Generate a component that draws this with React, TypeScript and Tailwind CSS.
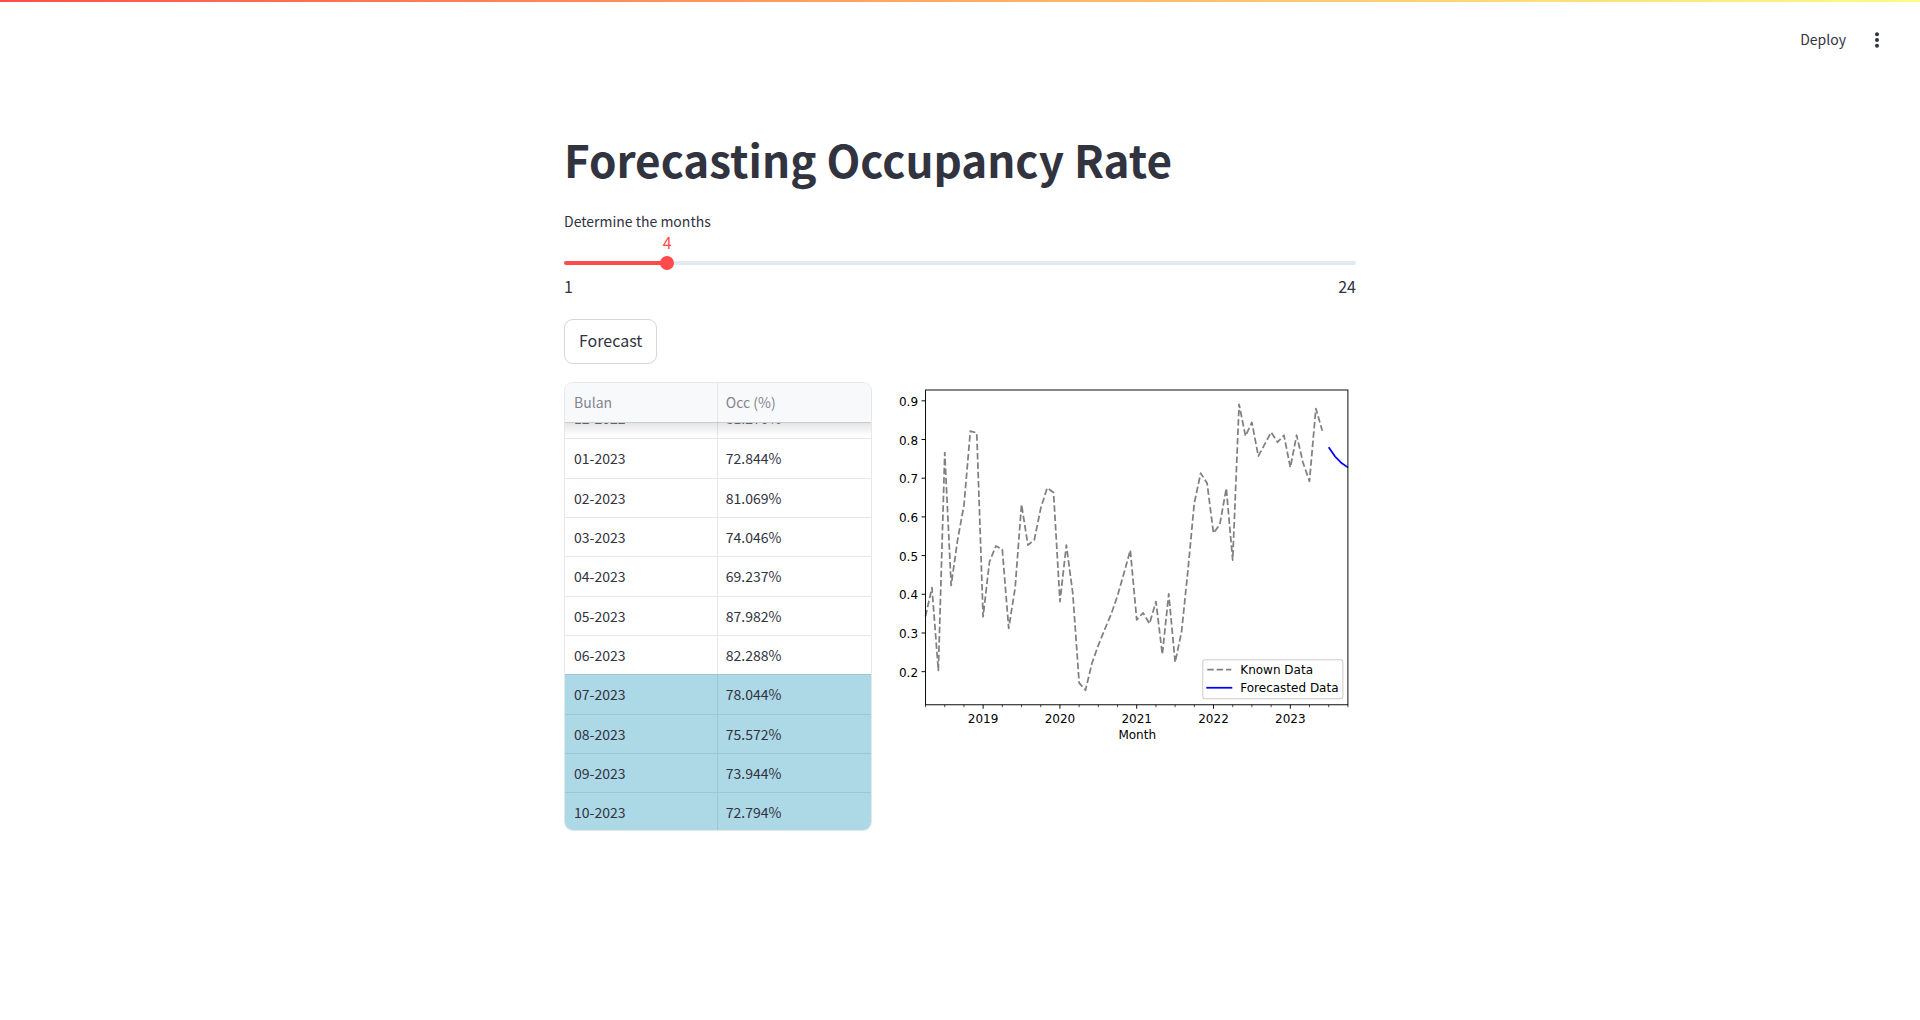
import { useState } from "react";

type Row = { month: string; occ: string; forecast?: boolean };

const rows: Row[] = [
  { month: "01-2023", occ: "72.844%" },
  { month: "02-2023", occ: "81.069%" },
  { month: "03-2023", occ: "74.046%" },
  { month: "04-2023", occ: "69.237%" },
  { month: "05-2023", occ: "87.982%" },
  { month: "06-2023", occ: "82.288%" },
  { month: "07-2023", occ: "78.044%", forecast: true },
  { month: "08-2023", occ: "75.572%", forecast: true },
  { month: "09-2023", occ: "73.944%", forecast: true },
  { month: "10-2023", occ: "72.794%", forecast: true },
];

// Monthly occupancy from April 2018 on.
const known = [
  0.343, 0.417, 0.203, 0.766, 0.423, 0.54, 0.63, 0.822, 0.817, 0.342, 0.484,
  0.525, 0.516, 0.312, 0.416, 0.632, 0.527, 0.541, 0.622, 0.675, 0.663, 0.381,
  0.527, 0.403, 0.171, 0.152, 0.221, 0.268, 0.309, 0.348, 0.396, 0.454, 0.514,
  0.334, 0.352, 0.324, 0.381, 0.245, 0.401, 0.224, 0.303, 0.462, 0.635, 0.713,
  0.687, 0.558, 0.581, 0.674, 0.488, 0.891, 0.809, 0.844, 0.757, 0.788, 0.819,
  0.793, 0.811, 0.728, 0.811, 0.74, 0.692, 0.88, 0.823,
];
const forecast = [0.78, 0.756, 0.739, 0.728];

const plot = { left: 33.5, right: 455.5, top: 8, bottom: 322.5 };
const xAt = (i: number) => plot.left + (i * (plot.right - plot.left)) / 66;
const yAt = (v: number) => 18.8 + (0.9 - v) * 386.6;
const points = (values: number[], start: number) =>
  values.map((v, i) => `${xAt(start + i).toFixed(1)},${yAt(v).toFixed(1)}`).join(" ");

const yTicks = [0.9, 0.8, 0.7, 0.6, 0.5, 0.4, 0.3, 0.2];
const quarters = Array.from({ length: 23 }, (_, i) => i * 3);
const years = [2019, 2020, 2021, 2022, 2023];

function Chart() {
  return (
    <svg
      viewBox="0 0 464 372"
      role="img"
      aria-label="Known and forecasted occupancy by month"
      className="block w-full font-['DejaVu_Sans',sans-serif] text-[12px]"
    >
      <polyline
        points={points(known, 0)}
        fill="none"
        stroke="#808080"
        strokeWidth="1.75"
        strokeDasharray="6.5 2.85"
        strokeLinejoin="round"
      />
      <polyline points={points(forecast, 63)} fill="none" stroke="#0000ff" strokeWidth="1.75" />
      <rect
        x={plot.left}
        y={plot.top}
        width={plot.right - plot.left}
        height={plot.bottom - plot.top}
        fill="none"
        stroke="#000"
        strokeWidth="0.95"
      />
      {yTicks.map((v) => (
        <g key={v}>
          <line x1={plot.left - 4} x2={plot.left} y1={yAt(v)} y2={yAt(v)} stroke="#000" strokeWidth="0.95" />
          <text x="26" y={yAt(v) + 5} textAnchor="end">
            {v.toFixed(1)}
          </text>
        </g>
      ))}
      {quarters.map((q) => (
        <line
          key={q}
          x1={xAt(q)}
          x2={xAt(q)}
          y1={plot.bottom}
          y2={plot.bottom + (q % 12 === 9 ? 4 : 2.4)}
          stroke="#000"
          strokeWidth={q % 12 === 9 ? 0.95 : 0.7}
        />
      ))}
      {years.map((year, i) => (
        <text key={year} x={xAt(9 + i * 12)} y="341" textAnchor="middle">
          {year}
        </text>
      ))}
      <text x="245" y="357" textAnchor="middle">
        Month
      </text>
      <rect x="310.5" y="277.5" width="140" height="39" rx="2.5" fill="#fff" fillOpacity="0.8" stroke="#ccc" />
      <line x1="315" x2="339" y1="287.5" y2="287.5" stroke="#808080" strokeWidth="1.75" strokeDasharray="6.5 2.85" />
      <line x1="314" x2="340" y1="305.5" y2="305.5" stroke="#0000ff" strokeWidth="1.75" />
      <text x="348" y="292">Known Data</text>
      <text x="348" y="309.5">Forecasted Data</text>
    </svg>
  );
}

function OccupancyTable() {
  return (
    <div className="relative mr-0.5 h-[449px] overflow-hidden rounded-[9px] border border-[#e6e7e9]">
      <table className="w-full table-fixed border-separate border-spacing-0 text-left">
        <thead>
          <tr className="h-[39px] bg-[#f8f9fb] text-[#83858e]">
            <th scope="col" className="border-r border-[#e6e7e9] px-[9px] pt-0 pb-0.5 font-normal">
              Bulan
            </th>
            <th scope="col" className="px-2 pt-0 pb-0.5 font-normal">
              Occ (%)
            </th>
          </tr>
        </thead>
        <tbody>
          <tr className="h-4 text-[#6b6d76]">
            <td className="border-r border-[#e6e7e9] px-[9px] py-0">
              <div className="flex h-4 flex-col justify-end overflow-hidden leading-[40px]">12-2022</div>
            </td>
            <td className="px-2 py-0">
              <div className="flex h-4 flex-col justify-end overflow-hidden leading-[40px]">81.270%</div>
            </td>
          </tr>
          {rows.map((row) => (
            <tr
              key={row.month}
              className={
                row.forecast
                  ? "h-[39px] border-[#9dc6d4] bg-[#add8e6] nth-[3n+2]:h-10"
                  : "h-[39px] border-[#e6e7e9] nth-[3n+2]:h-10"
              }
            >
              <td className="border-t border-r border-inherit px-[9px] pt-0 pb-px">{row.month}</td>
              <td className="border-t border-inherit px-2 pt-0 pb-px">{row.occ}</td>
            </tr>
          ))}
        </tbody>
      </table>
      <div className="pointer-events-none absolute inset-x-0 top-[39px] h-3.5 border-t border-[#c9cbcf] bg-linear-to-b from-black/10 to-transparent" />
    </div>
  );
}

export default function App() {
  const [months, setMonths] = useState(4);
  const percent = ((months - 1) / 23) * 100;

  return (
    <div className="min-h-screen bg-white font-['Noto_Sans_CJK_SC',sans-serif] text-[14px] leading-5 text-[#31333f]">
      <div className="h-0.5 bg-linear-to-r from-[#ff4b4b] to-[#fffd80]" />
      <header className="flex h-[76px] items-center justify-end gap-[22px] pr-[34px]">
        <button type="button" className="pb-0.5">
          Deploy
        </button>
        <button type="button" aria-label="Main menu" className="flex h-6 w-[18px] items-center justify-center">
          <svg viewBox="0 0 18 18" className="size-[18px]" fill="currentColor">
            <circle cx="9" cy="3.2" r="2" />
            <circle cx="9" cy="9" r="2" />
            <circle cx="9" cy="14.8" r="2" />
          </svg>
        </button>
      </header>

      <main className="mx-auto w-full max-w-[792px] pt-[51px]">
        <h1 className="text-[44px] leading-[60px] font-bold">Forecasting Occupancy Rate</h1>

        <label htmlFor="months" className="mt-[22px] block">
          Determine the months
        </label>
        <div className="relative mt-[30px] h-1 rounded-full bg-[#e4e8f1]">
          <div className="h-1 rounded-full bg-[#ff4b4b]" style={{ width: `${percent}%` }} />
          <output
            htmlFor="months"
            className="absolute bottom-[15px] -translate-x-1/2 text-[16px] leading-4 text-[#ff4b4b]"
            style={{ left: `${percent}%` }}
          >
            {months}
          </output>
          <input
            id="months"
            type="range"
            min={1}
            max={24}
            value={months}
            onChange={(e) => setMonths(Number(e.target.value))}
            className="absolute -inset-x-[7px] -top-[5px] h-3.5 w-[calc(100%+14px)] cursor-pointer appearance-none bg-transparent [&::-webkit-slider-thumb]:size-3.5 [&::-webkit-slider-thumb]:appearance-none [&::-webkit-slider-thumb]:rounded-full [&::-webkit-slider-thumb]:bg-[#ff4b4b]"
          />
        </div>
        <div className="mt-[9px] flex justify-between text-[16px] leading-6">
          <span>1</span>
          <span>24</span>
        </div>

        <button
          type="button"
          className="mt-[21px] block h-[45px] rounded-[9px] border border-[#d6d6d9] px-[14px] pb-[3px] text-[16px]"
        >
          Forecast
        </button>

        <div className="mt-[18px] grid grid-cols-[2fr_3fr] gap-[18px]">
          <OccupancyTable />
          <Chart />
        </div>
      </main>
    </div>
  );
}
